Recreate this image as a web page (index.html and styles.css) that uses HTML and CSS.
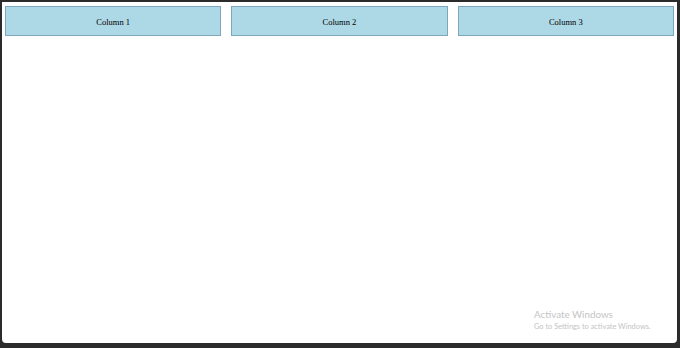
FILE: index.html
```html
<!DOCTYPE html>
<html>
<head>
<meta charset="utf-8">
<link rel="stylesheet" href="styles.css">
</head>
<body>
<div class="window">
  <div class="row">
    <div class="col">Column 1</div>
    <div class="col">Column 2</div>
    <div class="col">Column 3</div>
  </div>
  <div class="watermark">
    <div class="wm-title">Activate Windows</div>
    <div class="wm-sub">Go to Settings to activate Windows.</div>
  </div>
</div>
</body>
</html>
```

FILE: styles.css
```css
html, body {
  margin: 0;
  padding: 0;
  width: 680px;
  height: 348px;
  background: #2b2b2b;
  overflow: hidden;
}
body {
  padding: 2px 3px 5px 2px;
  box-sizing: border-box;
}
.window {
  position: relative;
  height: 100%;
  background: #ffffff;
  border-radius: 0 0 4px 4px;
  padding: 4px 3px;
  box-sizing: border-box;
}
.row {
  display: flex;
  gap: 10px;
}
.col {
  flex: 1;
  height: 30px;
  box-sizing: border-box;
  background: #add8e6;
  border: 1px solid #7ea6bd;
  display: flex;
  align-items: center;
  justify-content: center;
  padding-top: 1px;
  font-family: "Liberation Serif", serif;
  font-size: 8.5px;
  color: #000;
}
.watermark {
  position: absolute;
  left: 532px;
  top: 305px;
  font-family: Lato, "Open Sans", sans-serif;
  color: #c4c4c4;
}
.wm-title {
  font-size: 9.8px;
  line-height: 14px;
}
.wm-sub {
  font-size: 7.4px;
  line-height: 12px;
}
```
